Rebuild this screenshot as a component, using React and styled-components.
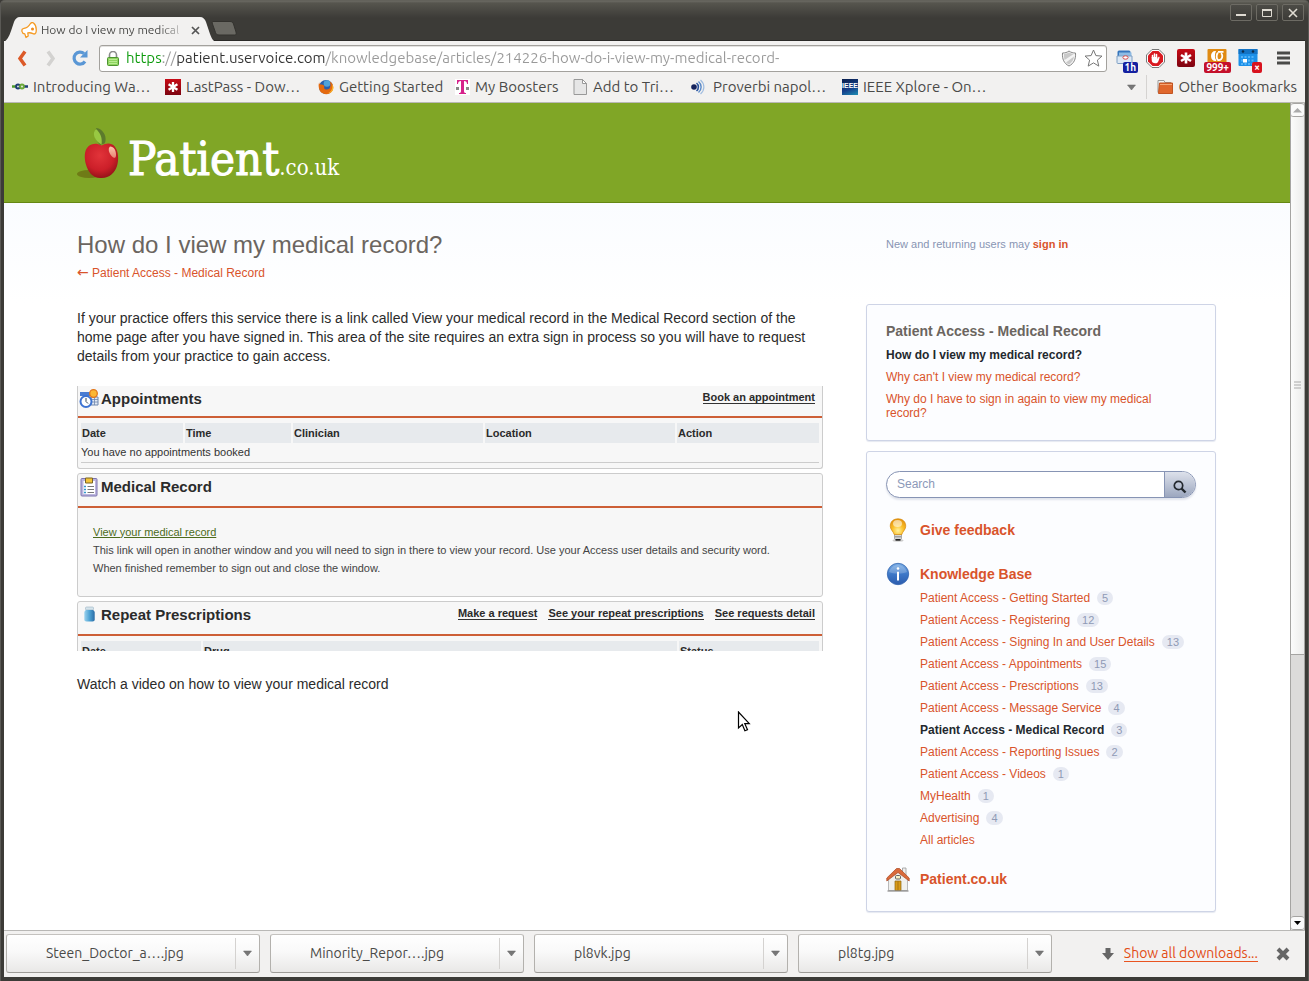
import React from "react";
import styled, { createGlobalStyle } from "styled-components";

const ui = `"Ubuntu", "Noto Sans", sans-serif`;
const body = `"Liberation Sans", Arial, sans-serif`;

const Global = createGlobalStyle`
  *, *::before, *::after { box-sizing: border-box; }
  html, body { margin: 0; padding: 0; }
  body { font-family: ${body}; color: #2b2b2b; background: #3c3b37; }
  button, input { font: inherit; color: inherit; margin: 0; }
  button { padding: 0; border: 0; background: none; cursor: default; }
  svg { display: block; flex: none; }
  h1, h2, h3, p, ul { margin: 0; padding: 0; }
  ul { list-style: none; }
`;

/* ---------- window frame ---------- */

const Window = styled.div`
  min-height: 100vh;
  display: flex;
  flex-direction: column;
  padding: 0 4px 4px;
  background: linear-gradient(#5b5a53 0, #6b6a63 1px, #56554e 3px, #3c3b37 18px);
  border-radius: 5px 5px 0 0;
  box-shadow: inset 1px 0 #5a5955, inset -1px 0 #5a5955;
`;

const TabStrip = styled.header`
  display: flex;
  height: 41px;
  justify-content: space-between;
  border-bottom: 1px solid #2b2a28;
`;

const TabGroup = styled.div`
  display: flex;
  align-items: flex-end;
  margin-bottom: -1px;
`;

const Tab = styled.div`
  position: relative;
  width: 212px;
  height: 25px;
  margin-bottom: -1px;
  display: flex;
  align-items: center;
  gap: 4px;
  padding: 1px 12px 0 17px;
  font: 12px/18px ${ui};
  color: #4a4a48;
`;

const TabShape = styled.svg`
  position: absolute;
  inset: 0;
  z-index: 0;
`;

const TabTitle = styled.span`
  position: relative;
  flex: 1;
  overflow: hidden;
  white-space: nowrap;
  mask-image: linear-gradient(90deg, #000 84%, transparent 104%);
`;

const OverTab = styled.span`
  position: relative;
  display: flex;
`;

const TabClose = styled.button`
  position: relative;
  display: grid;
  place-items: center;
  width: 18px;
  height: 18px;
`;

const NewTab = styled.button`
  margin: 0 0 5px -5px;
`;

const WindowButtons = styled.div`
  display: flex;
  gap: 4px;
  padding: 4px 1px 0 0;
`;

const WindowButton = styled.button`
  display: grid;
  place-items: center;
  width: 22px;
  height: 17px;
  border: 1px solid #6d6b64;
  border-radius: 2px;
  background: linear-gradient(#4c4b46, #3c3b37);
`;

/* ---------- toolbar ---------- */

const Toolbar = styled.nav`
  display: flex;
  align-items: center;
  height: 34px;
  padding: 0 14px 0 8px;
  background: #f2f1f0;
`;

const NavButton = styled.button`
  display: grid;
  place-items: center;
  width: 20px;
  height: 24px;
  margin-right: 9px;
`;

const UrlBox = styled.div`
  flex: 1;
  display: flex;
  align-items: center;
  gap: 7px;
  height: 27px;
  padding: 0 3px 0 7px;
  border: 1px solid #a3a19d;
  border-radius: 3px;
  background: #fff;
  box-shadow: inset 0 1px #e3e2e0;
`;

const UrlInput = styled.input`
  flex: 1;
  min-width: 0;
  padding: 0;
  border: 0;
  outline: 0;
  font: 15px/22px ${ui};
  background: linear-gradient(90deg, #0a9a0a 37px, #999 37px 51px, #333 51px 199px, #999 199px);
  background-clip: text;
  -webkit-text-fill-color: transparent;
`;

const Extensions = styled.div`
  display: flex;
  align-items: center;
  gap: 7px;
  margin: 0 16px 0 5px;
`;

const ExtButton = styled.button`
  position: relative;
  display: grid;
  place-items: center;
  width: 24px;
  height: 24px;
`;

const ExtBadge = styled.span`
  position: absolute;
  right: -2px;
  bottom: -3px;
  padding: 0 2px;
  border-radius: 2px;
  background: ${(p) => p.$color};
  color: #fff;
  font: bold 10px/11px ${ui};
`;

const BookmarkBar = styled.nav`
  display: flex;
  align-items: center;
  height: 28px;
  padding: 0 8px 3px;
  border-bottom: 1px solid #b9b8b6;
  background: #f2f1f0;
  font: 15px/20px ${ui};
`;

const Bookmark = styled.a`
  display: flex;
  align-items: center;
  gap: 5px;
  width: ${(p) => p.$width};
  flex: none;
  color: #4a4a48;
  white-space: nowrap;
  text-decoration: none;
`;

const More = styled.button`
  margin-left: auto;
  padding: 0 10px;
`;

const BarRule = styled.span`
  height: 24px;
  padding-left: 10px;
  border-left: 1px solid #d5d3d1;
`;

/* ---------- page ---------- */

const Viewport = styled.div`
  flex: 1;
  display: flex;
  background: #fff;
`;

const Page = styled.div`
  flex: 1;
  min-width: 0;
`;

const Banner = styled.div`
  display: flex;
  height: 100px;
  padding: 24px 73px 0;
  border-bottom: 1px solid #658712;
  background: #80a626;
`;

const Logo = styled.a`
  display: flex;
  gap: 8px;
  color: #fff;
  text-decoration: none;
  font-family: "DejaVu Serif Condensed", "DejaVu Serif", serif;
`;

const LogoText = styled.span`
  font-size: 47px;
  line-height: 64px;
  white-space: nowrap;
  -webkit-text-stroke: 1px #fff;
`;

const LogoSuffix = styled.span`
  font-size: 22px;
  -webkit-text-stroke: 0;
`;

const Columns = styled.div`
  display: grid;
  grid-template-columns: minmax(0, 1fr) 350px;
  gap: 43px;
  padding: 26px 74px 18px 73px;
  background: linear-gradient(#fafcff, #fff 100px);
`;

const Main = styled.main`
  position: relative;
`;

const Title = styled.h1`
  font-size: 24px;
  line-height: 32px;
  font-weight: normal;
  color: #6b6560;
`;

const Link = styled.a`
  color: #d9542b;
  text-decoration: none;
`;

const Arrow = styled.span`
  font-family: "DejaVu Sans", sans-serif;
  font-size: 14px;
  line-height: 1;
`;

const BackLine = styled.p`
  margin-top: 3px;
  font-size: 12px;
  line-height: 18px;
`;

const Paragraph = styled.p`
  margin-top: ${(p) => p.$top};
  font-size: 14px;
  line-height: 19px;
`;

const Shot = styled.section`
  height: 265px;
  margin-top: 20px;
  display: flex;
  flex-direction: column;
  gap: 4px;
  overflow: hidden;
  color: #444;
  font-size: 11px;
`;

const Card = styled.div`
  flex: none;
  border: 1px solid #ccc;
  border-top-width: ${(p) => (p.$cut ? 0 : "1px")};
  border-radius: ${(p) => (p.$cut ? "0 0 3px 3px" : "3px")};
  background: #f7f7f7;
`;

const CardHead = styled.div`
  display: flex;
  align-items: center;
  height: ${(p) => p.$height};
  padding: 0 7px 5px 1px;
  border-bottom: 2px solid #cd5f36;
  gap: 2px;
`;

const CardTitle = styled.h2`
  flex: 1;
  font-size: 15px;
  line-height: 20px;
  color: #2b2b2b;
`;

const CardLink = styled.a`
  margin: 0 0 3px 9px;
  border-bottom: 1px solid #333;
  color: #2b2b2b;
  font-weight: bold;
  font-size: 11px;
  line-height: 12px;
  text-decoration: none;
`;

const Table = styled.table`
  width: calc(100% - 6px);
  margin: 5px 3px;
  table-layout: fixed;
  border-collapse: collapse;
  text-align: left;

  th {
    height: 20px;
    padding: 0 1px;
    border-right: 2px solid #f7f7f7;
    background: #e7eaed;
    background-clip: padding-box;
    color: #2b2b2b;
  }
  th:last-child { border-right: 0; }
  td {
    height: 19px;
    padding: 0;
    border-bottom: 1px solid #ccc;
    color: #333;
  }
`;

const CardBody = styled.div`
  padding: 15px 15px 19px;
  line-height: 18px;
`;

const RecordLink = styled.a`
  color: #4c6b1c;
`;

const Cursor = styled.svg`
  position: absolute;
  left: 660px;
  top: 482px;
`;

/* ---------- sidebar ---------- */

const Side = styled.aside`
  display: flex;
  flex-direction: column;
  gap: 10px;
`;

const SignIn = styled.p`
  height: 65px;
  padding: 6px 20px 0;
  font-size: 11px;
  line-height: 18px;
  color: #8895b3;
`;

const Panel = styled.section`
  padding: 16px 19px 20px;
  border: 1px solid #ced4e6;
  border-radius: 3px;
  background: #fcfdff;
  box-shadow: 0 1px 1px #e6e9f1;
  font-size: 12px;
`;

const PanelTitle = styled.h3`
  margin-bottom: 7px;
  font-size: 14px;
  line-height: 20px;
  color: #6b6560;
`;

const Related = styled.ul`
  display: flex;
  flex-direction: column;
  gap: 8px;
  padding-right: 20px;
  line-height: 14px;
`;

const Search = styled.form`
  display: flex;
  height: 27px;
  margin: 3px 0 20px;
  overflow: hidden;
  border: 1px solid #8794b4;
  border-radius: 14px;
  background: #fff;
  box-shadow: 0 2px 2px #e1e4ec;
`;

const SearchInput = styled.input`
  flex: 1;
  min-width: 0;
  padding: 0 10px 2px;
  border: 0;
  outline: 0;
  background: none;
  &::placeholder { color: #8c99b8; opacity: 1; }
`;

const SearchButton = styled.button`
  display: grid;
  place-items: center;
  width: 31px;
  padding-top: 4px;
  border-left: 1px solid #8794b4;
  background: linear-gradient(#dde1eb, #9ca7bf);
`;

const Section = styled.div`
  display: flex;
  align-items: center;
  gap: 10px;
  height: 24px;
  margin-top: ${(p) => p.$top || 0};
  font-size: 14px;
  font-weight: bold;
`;

const Topics = styled.ul`
  margin-left: 34px;
  padding-top: 1px;
`;

const Topic = styled.li`
  display: flex;
  align-items: center;
  gap: 7px;
  height: 22px;
`;

const Current = styled.strong`
  color: #23282e;
`;

const Count = styled.span`
  padding: 0 5px;
  border-radius: 7px;
  background: #e6e9f2;
  color: #8f9ab5;
  font-size: 11px;
  line-height: 14px;
`;

/* ---------- scroll bar ---------- */

const ScrollTrack = styled.div`
  width: 15px;
  display: flex;
  flex-direction: column;
  border: solid #a5a4a2;
  border-width: 0 1px;
  background: #dcdbda;
`;

const ScrollButton = styled.button`
  display: grid;
  place-items: center;
  height: 14px;
  border: solid #a5a4a2;
  border-width: 1px 0;
  border-radius: 3px;
  background: #fafafa;
`;

const Thumb = styled.div`
  flex: 0 0 65%;
  display: grid;
  place-items: center;
  border-bottom: 1px solid #a5a4a2;
  background: linear-gradient(90deg, #fbfbfb, #ececeb);
`;

/* ---------- downloads ---------- */

const Downloads = styled.footer`
  display: flex;
  align-items: center;
  gap: 10px;
  height: 47px;
  padding: 0 15px 1px 2px;
  border-top: 1px solid #b9b8b6;
  background: #f2f1f0;
  font: 14px/18px ${ui};
  color: #4a4a48;
`;

const Download = styled.div`
  display: flex;
  flex: 0 1 254px;
  height: 39px;
  border: 1px solid #b3b1ad;
  border-color: #c4c2bf #b3b1ad #9d9b97;
  border-radius: 3px;
  background: linear-gradient(#fff, #f9f9f9 45%, #e9e8e7);
`;

const FileButton = styled.button`
  flex: 1;
  padding: 0 0 1px 39px;
  text-align: left;
`;

const FileMenu = styled.button`
  display: grid;
  place-items: center;
  width: 24px;
  margin: 3px 0;
  border-left: 1px solid #d4d2d0;
`;

const ShowAll = styled.a`
  margin-right: 8px;
  border-bottom: 1px solid #e95420;
  color: #e24c14;
  line-height: 16px;
  text-decoration: none;
`;

const Spacer = styled.span`
  flex: 1;
`;

/* ---------- drawings ---------- */

const Down = () => (
  <svg width="9" height="7" viewBox="0 0 9 7"><path d="M.5 1h8L4.500 6z" fill="#777" stroke="#666" strokeWidth=".5" /></svg>
);

const Asterisk = ({ size = 16, r = 0 }) => (
  <svg width={size} height={size} viewBox="0 0 18 18">
    <defs><linearGradient id="lp" x2="0" y2="1"><stop stopColor="#c80b16" /><stop offset="1" stopColor="#7c0410" /></linearGradient></defs>
    <rect width="18" height="18" rx={r} fill="url(#lp)" />
    <path d="M9 3.500v11M4 6l10 6M14 6L4 12" stroke="#fff" strokeWidth="2.600" />
  </svg>
);

const Megaphone = () => (
  <svg width="16" height="17" viewBox="0 0 16 17" fill="#fff" stroke="#f59a23" strokeWidth="1.300" strokeLinejoin="round">
    <path d="M1 9.500c-.4-2 .6-3 2-3.200C6 6 8 4 9.500 1.500c.8-1 2-1.200 3-.4 2 1.600 3 5 2.700 8.200-.2 2.200-1.600 3.200-3.200 2.400-2-1-3.500-1.200-5.200-.8l.4 3.100-2.200 1.500-1.200-3.600C2.400 11.700 1.200 11 1 9.500z" />
    <circle cx="11.500" cy="7" r="1.500" fill="#f08a1a" stroke="none" />
  </svg>
);

const Apple = () => (
  <svg width="43" height="54" viewBox="0 0 43 54">
    <defs>
      <radialGradient id="ap" cx=".45" cy=".35" r=".7"><stop stopColor="#e2343a" /><stop offset=".6" stopColor="#cc1f29" /><stop offset="1" stopColor="#8c1116" /></radialGradient>
      <linearGradient id="sheen" x2="0" y2="1"><stop stopColor="#fbc7ac" /><stop offset="1" stopColor="#e98273" /></linearGradient>
    </defs>
    <ellipse cx="12" cy="47" rx="12" ry="4" fill="#6f7b16" />
    <path d="M24.500 18.500c-4-2.300-9.500-2.500-13.300 1C7 23.500 7.300 31 8.800 37c2.200 8 7.200 14.500 15.200 14 8 .5 13.700-5 16-12 2-6 1.500-15-2.300-19.500-3.400-4-8.700-3.500-13.200-1z" fill="url(#ap)" />
    <path d="M23 18C18 13 15.500 5 19.500 1c6 1 10 7 9 13-.3 2-1 3-2.500 3z" fill="#5c7a2c" />
    <path d="M24.500 17.500C17.500 14 14.500 6 19 2c4.500 4 6.500 9 5.500 15.500z" fill="#98c842" />
    <path d="M33 19.500c4 0 6 4 6 8.500-.1 3.500-2 3.500-4 1.500-3-3-4.500-8-2-10z" fill="url(#sheen)" />
  </svg>
);

const Shield = () => (
  <svg width="16" height="17" viewBox="0 0 16 17"><path d="M8 1c2 1.500 4 2 6.500 2 .5 6-1.500 10.500-6.500 13C3 13.500 1 9 1.500 3 4 3 6 2.500 8 1z" fill="#f4f4f4" stroke="#888" /><path d="M3 4c2 0 3.500-.5 5-1.400 1.500.9 3 1.400 4.700 1.400L3.500 10C3 8 2.900 6 3 4zM5 12.500l8-6c-.3 3-2 6-5 8-1.200-.6-2.200-1.200-3-2z" fill="#c9c9c9" /></svg>
);

const Star = () => (
  <svg width="19" height="18" viewBox="0 0 19 18"><path d="M9.500 1l2.400 5.600 6.100.5-4.600 4 1.400 6-5.300-3.200-5.300 3.200 1.400-6-4.600-4 6.100-.5z" fill="#fff" stroke="#777" strokeLinejoin="round" /></svg>
);

const CheckMail = () => (
  <svg width="17" height="16" viewBox="0 0 17 16"><rect x="1.500" y=".5" width="13" height="9" rx="1.500" fill="#3676bd" /><rect x="3" y="2.500" width="12.500" height="3.500" fill="#8dbbe4" /><path d="M1 6h15v6.500c0 .6-.4 1-1 1H2c-.6 0-1-.4-1-1z" fill="#dde8f4" stroke="#7f9fc4" /><ellipse cx="9.500" cy="7.500" rx="2.600" ry="1.700" fill="#fff" stroke="#d44a4a" /></svg>
);

const StopHand = () => (
  <svg width="19" height="19" viewBox="0 0 19 19"><path d="M6 .5h7L18.500 6v7L13 18.500H6L.5 13V6z" fill="#fff" stroke="#777" /><path d="M6.500 2h6L17 6.500v6L12.500 17h-6L2 12.500v-6z" fill="#d91920" /><path d="M6.500 9V6.500M8.500 9V5M10.500 9V5.500" stroke="#fff" strokeWidth="1.500" strokeLinecap="round" /><path d="M5.700 8h5.600v2l1-1.800c.5-.8 1.500-.4 1.300.5l-1 3c-.5 1.600-1.600 2.600-3.300 2.600-2.200 0-3.600-1.200-3.600-3.300z" fill="#fff" /></svg>
);

const GoldStats = () => (
  <svg width="20" height="18" viewBox="0 0 20 18">
    <rect width="19" height="16" x=".5" rx="1" fill="#e08a12" />
    <path d="M9 2C6 1.600 4 3.800 4 7s2 5 4.500 5c.8 0 1-.4.600-1C7.500 9 7.500 5 9 2z" fill="#fff" />
    <path d="M11 3.800c-1.800 1.500-1.800 5.800 0 7.200 2.800.4 4.300-1.500 4.300-4 0-1.300-.5-2.200-1.300-2.800" fill="none" stroke="#fff" strokeWidth="1.800" />
    <path d="M11 2.900h5.500" stroke="#fff" strokeWidth="1.800" />
  </svg>
);

const CalendarBlue = () => (
  <svg width="20" height="18" viewBox="0 0 20 18"><rect width="19" height="17" x=".5" rx="1" fill="#1c90e8" /><rect x=".5" width="19" height="5" fill="#1473c4" /><circle cx="5" cy="2.500" r="1.300" fill="#0c2c4c" /><circle cx="15" cy="2.500" r="1.300" fill="#0c2c4c" /><path d="M3 8h14M3 11.500h14M3 15h14" stroke="#52b2f7" strokeWidth="2" strokeDasharray="2 1.500" /><rect x="5" y="10" width="4" height="3.500" fill="#fff" /></svg>
);

const Knot = () => (
  <svg width="16" height="16" viewBox="0 0 16 16" fill="none"><path d="M0 7.500h4" stroke="#4c9a2c" strokeWidth="2.500" /><path d="M12 7.500h4" stroke="#1f3e74" strokeWidth="2.500" /><circle cx="6" cy="7.500" r="1.900" stroke="#1f3e74" strokeWidth="2" /><circle cx="10" cy="7.500" r="1.900" stroke="#6ba83a" strokeWidth="2" /></svg>
);

const Firefox = () => (
  <svg width="16" height="16" viewBox="0 0 16 16"><circle cx="8" cy="8" r="7" fill="#2a5fae" /><circle cx="9" cy="4.500" r="3.300" fill="#4fa3dc" /><path d="M1.200 3C1 5 2 5.500 3.500 5.500 6 6 7 7 6 8.500 6 10.500 9 11.500 11.500 9.500c1.200-2 1.300-4 .3-7C15 4 16 8 14.500 11.500 12.500 16 5 16.500 2 12 .3 9 .3 6 1.200 3z" fill="#e4690e" /><path d="M14 5.500c1 4-1 8-5 9 4-.2 6.300-2.500 6.500-6 0-1-.7-2.300-1.500-3z" fill="#fcb42a" /></svg>
);

const TMobile = () => (
  <svg width="15" height="16" viewBox="0 0 15 16"><rect width="15" height="16" fill="#fff" /><path d="M2 1h11v4h-1c0-2-1-3-3-3v10c0 1.500.5 2 2 2v1H4v-1c1.500 0 2-.5 2-2V2C4 2 3 3 3 5H2z" fill="#d6228b" /><path d="M1 8h3v3H1zM11 8h3v3h-3z" fill="#888" /></svg>
);

const PageIcon = () => (
  <svg width="15" height="16" viewBox="0 0 15 16"><path d="M1 .5h8.500l4 4v11H1z" fill="#e6e6e6" stroke="#999" /><path d="M9.500.5v4h4z" fill="#fff" stroke="#999" /></svg>
);

const Sound = () => (
  <svg width="18" height="16" viewBox="0 0 18 16" fill="none"><circle cx="4" cy="8" r="2.800" fill="#14225c" /><path d="M6.500 4c2.500 2 2.500 6 0 8" stroke="#27509c" strokeWidth="1.600" /><path d="M8.500 2.500c3.500 3 3.500 8 0 11" stroke="#5b8ac8" strokeWidth="1.400" /><path d="M10.500 1c4.500 4 4.500 10 0 14" stroke="#9fbce0" strokeWidth="1.200" /></svg>
);

const Badge = styled.span`
  width: 16px;
  height: 16px;
  flex: none;
  background: linear-gradient(160deg, #081d4b, #16418c 60%, #1e90b4);
  color: #fff;
  font: bold 7px/14px ${body};
  text-align: center;
`;

const Folder = () => (
  <svg width="16" height="16" viewBox="0 0 16 16"><path d="M1 13.500V1.500h6l1 2h6" fill="#f4f4f4" stroke="#999" /><path d="M2.500 4h13v10.500h-14z" fill="#e0672c" stroke="#c25422" /><path d="M3 5.500h12" stroke="#f5a675" /></svg>
);

const Bulb = () => (
  <svg width="24" height="24" viewBox="0 0 24 24">
    <defs><radialGradient id="bu" cx=".5" cy=".75" r=".8"><stop stopColor="#fff3a0" /><stop offset=".45" stopColor="#fbc02a" /><stop offset="1" stopColor="#e08a08" /></radialGradient></defs>
    <ellipse cx="12" cy="22.500" rx="5.500" ry="1.200" fill="#ccc" />
    <path d="M8.500 16h7v4.500l-1.500 2h-4l-1.500-2z" fill="#d7d7d7" stroke="#8a8a8a" strokeWidth=".7" />
    <path d="M9 18.800h6" stroke="#777" strokeWidth=".8" /><path d="M9.500 21.800h5" stroke="#222" strokeWidth="1.600" />
    <path d="M12 .8c5 0 8 3.400 7.700 7.600-.2 3.600-3 4.800-3.900 8.100H8.200C7.300 13.200 4.500 12 4.300 8.400 4 4.200 7 .8 12 .8z" fill="url(#bu)" stroke="#d58a0c" strokeWidth=".7" />
    <ellipse cx="11.500" cy="5.500" rx="4.500" ry="3.500" fill="#fff" opacity=".55" />
  </svg>
);

const Info = () => (
  <svg width="24" height="24" viewBox="0 0 24 24">
    <defs><linearGradient id="inf" x2="0" y2="1"><stop stopColor="#7cafe6" /><stop offset=".5" stopColor="#3d78c8" /><stop offset="1" stopColor="#2c5cae" /></linearGradient></defs>
    <circle cx="12" cy="12" r="10.700" fill="url(#inf)" stroke="#3466b0" strokeWidth=".8" />
    <path d="M3 10a9.300 9.300 0 0118 0c-5 2-13 2-18 0z" fill="#fff" opacity=".2" />
    <path d="M12 9.800V18.500" stroke="#fff" strokeWidth="2" /><circle cx="12" cy="6.500" r="1.300" fill="#fff" />
  </svg>
);

const House = () => (
  <svg width="24" height="25" viewBox="0 0 24 25">
    <path d="M16.500 1h3.500v8h-3.500z" fill="#eee" stroke="#999" strokeWidth=".8" />
    <path d="M2.500 11.500L12 3l9.500 8.500v12h-19z" fill="#f0f0ee" stroke="#aaa" strokeWidth=".8" />
    <path d="M.8 11L10.500 1.500h3L23.200 11v3L12 5.500.8 14z" fill="#d96a3b" stroke="#a94520" strokeWidth=".7" />
    <rect x="9.500" y="8.500" width="5" height="3.500" rx="1" fill="#f8efc4" stroke="#555" strokeWidth=".9" />
    <path d="M9 14h6v9.500H9z" fill="#d89a18" stroke="#8e6510" strokeWidth=".7" />
    <path d="M12 14v9.500" stroke="#a87510" /><path d="M1.500 24h21" stroke="#8b8b8b" strokeWidth="1.200" />
  </svg>
);

const Clock = () => (
  <svg width="20" height="20" viewBox="0 0 20 20"><rect x="1" y="3" width="17" height="4" fill="#4a7cd2" /><path d="M12 8h7v8h-7z" fill="#e2e9f4" stroke="#6e86ad" /><path d="M12 10.500h7M12 13h7M15.500 8v8" stroke="#6e86ad" strokeWidth=".8" /><circle cx="7" cy="12.500" r="5.500" fill="#fff" stroke="#3d73d2" strokeWidth="2" /><path d="M7 9v3.500l2 2" fill="none" stroke="#345" /><circle cx="14.500" cy="4.500" r="3.800" fill="#fbb734" stroke="#e2761a" strokeWidth="1.300" /></svg>
);

const Clipboard = () => (
  <svg width="20" height="20" viewBox="0 0 20 20"><rect x="2" y="1.500" width="16" height="17.500" rx="1" fill="#bcb6de" stroke="#7d74b0" /><rect x="4.500" y="4" width="11.500" height="13" fill="#fff" /><path d="M6.500 1h7v5h-7z" fill="#f3c43a" stroke="#796424" /><path d="M8.500 9.500H15M8.500 12.500H15M8.500 15.500H15" stroke="#777" /><path d="M5 9.500h2M5 12.500h2M5 15.500h2" stroke="#3399cc" strokeWidth="1.500" /></svg>
);

const Bottle = () => (
  <svg width="20" height="20" viewBox="0 0 20 20"><defs><linearGradient id="bo"><stop stopColor="#9cd3ee" /><stop offset=".5" stopColor="#4ea3d4" /><stop offset="1" stopColor="#2a6ca6" /></linearGradient></defs><rect x="6.500" y="2" width="8" height="3" rx="1" fill="#d5e4ec" stroke="#9ab4c4" strokeWidth=".6" /><path d="M7 5h7c1.200.6 1.700 1.600 1.700 2.800v6.500c0 1.500-.8 2.200-2.200 2.200h-6c-1.500 0-2.200-.7-2.200-2.200V7.800C5.300 6.600 5.800 5.600 7 5z" fill="url(#bo)" /></svg>
);

const bookmarks = [
  ["Introducing Wa…", <Knot />, "153px"],
  ["LastPass - Dow…", <Asterisk />, "153px"],
  ["Getting Started", <Firefox />, "137px"],
  ["My Boosters", <TMobile />, "118px"],
  ["Add to Tri…", <PageIcon />, "117px"],
  ["Proverbi napol…", <Sound />, "152px"],
  ["IEEE Xplore - On…", <Badge>IEEE</Badge>, "145px"],
];

const topics = [
  ["Patient Access - Getting Started", 5],
  ["Patient Access - Registering", 12],
  ["Patient Access - Signing In and User Details", 13],
  ["Patient Access - Appointments", 15],
  ["Patient Access - Prescriptions", 13],
  ["Patient Access - Message Service", 4],
  ["Patient Access - Medical Record", 3],
  ["Patient Access - Reporting Issues", 2],
  ["Patient Access - Videos", 1],
  ["MyHealth", 1],
  ["Advertising", 4],
  ["All articles"],
];

const files = ["Steen_Doctor_a….jpg", "Minority_Repor….jpg", "pl8vk.jpg", "pl8tg.jpg"];

export default function App() {
  return (
    <Window>
      <Global />
      <TabStrip>
        <TabGroup>
          <Tab>
            <TabShape width="212" height="25" viewBox="0 0 212 25">
              <path d="M0 25C3 23 5 20 7 14L10 5C11 2 13 0 16 0H196C199 0 201 2 202 5L206 17C208 22 209 24 212 25z" fill="#f2f1f0" />
            </TabShape>
            <OverTab><Megaphone /></OverTab>
            <TabTitle>How do I view my medical</TabTitle>
            <TabClose aria-label="Close tab">
              <svg width="9" height="9" viewBox="0 0 9 9"><path d="M1 1l7 7M8 1L1 8" stroke="#555" strokeWidth="1.700" /></svg>
            </TabClose>
          </Tab>
          <NewTab aria-label="New tab">
            <svg width="26" height="15" viewBox="0 0 26 15"><path d="M2 .5h17c2 0 3 1 3.500 2.500L25 11c.5 2 0 3-1.500 3H8c-2 0-3-1-3.500-2.500L1.500 3C1 1.500 1 .5 2 .5z" fill="#6a6963" stroke="#33322e" /></svg>
          </NewTab>
        </TabGroup>
        <WindowButtons>
          <WindowButton aria-label="Minimise"><svg width="12" height="10"><path d="M1 7h10" stroke="#dfdbd2" strokeWidth="2" /></svg></WindowButton>
          <WindowButton aria-label="Maximise"><svg width="12" height="10"><path d="M1.500 2h9v6.500h-9z" fill="none" stroke="#dfdbd2" /><path d="M1 2h10" stroke="#dfdbd2" strokeWidth="2" /></svg></WindowButton>
          <WindowButton aria-label="Close"><svg width="10" height="10"><path d="M1 1l8 8M9 1L1 9" stroke="#dfdbd2" strokeWidth="1.600" /></svg></WindowButton>
        </WindowButtons>
      </TabStrip>

      <Toolbar>
        <NavButton aria-label="Back"><svg width="12" height="17" viewBox="0 0 12 17"><path d="M9 1.500L4 8.500L9 15.500" fill="none" stroke="#dc5a28" strokeWidth="3.500" /></svg></NavButton>
        <NavButton aria-label="Forward"><svg width="12" height="17" viewBox="0 0 12 17"><path d="M3 1.500l5 7L3 15.500" fill="none" stroke="#d3d2d0" strokeWidth="3.500" /></svg></NavButton>
        <NavButton aria-label="Reload"><svg width="18" height="18" viewBox="0 0 18 18"><path d="M14 12.500A6 6 0 1113 4.500" fill="none" stroke="#5a97d5" strokeWidth="3.200" /><path d="M16.500 1v7.500H9z" fill="#5a97d5" /></svg></NavButton>
        <UrlBox>
          <svg width="12" height="15" viewBox="0 0 12 15"><path d="M2.500 7V4a3.500 3.500 0 017 0v3" fill="none" stroke="#8b8b8b" strokeWidth="1.600" /><rect x=".5" y="6.500" width="11" height="8" rx="1" fill="#8fd460" stroke="#4d9430" /><path d="M2 8.500h8M2 10.500h8M2 12.500h8" stroke="#b9ec92" /></svg>
          <UrlInput aria-label="Address" defaultValue="https://patient.uservoice.com/knowledgebase/articles/214226-how-do-i-view-my-medical-record-" />
          <Shield />
          <Star />
        </UrlBox>
        <Extensions>
          <ExtButton aria-label="Mail checker"><CheckMail /><ExtBadge $color="#1420a0">1h</ExtBadge></ExtButton>
          <ExtButton aria-label="Ad blocker"><StopHand /></ExtButton>
          <ExtButton aria-label="LastPass"><Asterisk size={18} r={2} /></ExtButton>
          <ExtButton aria-label="Statistics"><GoldStats /><ExtBadge $color="#c4102a">999+</ExtBadge></ExtButton>
          <ExtButton aria-label="Calendar"><CalendarBlue /><ExtBadge $color="#d8121e">×</ExtBadge></ExtButton>
        </Extensions>
        <button aria-label="Menu"><svg width="15" height="14"><path d="M1 2h13M1 7h13M1 12h13" stroke="#4a4a48" strokeWidth="3" /></svg></button>
      </Toolbar>

      <BookmarkBar>
        {bookmarks.map(([name, icon, width]) => (
          <Bookmark key={name} href="#" $width={width}>{icon}{name}</Bookmark>
        ))}
        <More aria-label="More bookmarks"><Down /></More>
        <BarRule />
        <Bookmark href="#"><Folder />Other Bookmarks</Bookmark>
      </BookmarkBar>

      <Viewport>
        <Page>
          <Banner>
            <Logo href="#"><Apple /><LogoText>Patient<LogoSuffix>.co.uk</LogoSuffix></LogoText></Logo>
          </Banner>
          <Columns>
            <Main>
              <Title>How do I view my medical record?</Title>
              <BackLine><Link href="#"><Arrow>←</Arrow> Patient Access - Medical Record</Link></BackLine>
              <Paragraph $top="27px">
                If your practice offers this service there is a link called View your medical record in the Medical Record section of the home page after you have signed in. This area of the site requires an extra sign in process so you will have to request details from your practice to gain access.
              </Paragraph>
              <Shot>
                <Card $cut>
                  <CardHead $height="32px">
                    <Clock /><CardTitle>Appointments</CardTitle>
                    <CardLink href="#">Book an appointment</CardLink>
                  </CardHead>
                  <Table>
                    <colgroup><col width="103" /><col width="108" /><col width="192" /><col width="192" /><col /></colgroup>
                    <thead><tr><th>Date</th><th>Time</th><th>Clinician</th><th>Location</th><th>Action</th></tr></thead>
                    <tbody><tr><td colSpan="5">You have no appointments booked</td></tr></tbody>
                  </Table>
                </Card>
                <Card>
                  <CardHead $height="34px"><Clipboard /><CardTitle>Medical Record</CardTitle></CardHead>
                  <CardBody>
                    <RecordLink href="#">View your medical record</RecordLink>
                    <p>This link will open in another window and you will need to sign in there to view your record. Use your Access user details and security word.</p>
                    <p>When finished remember to sign out and close the window.</p>
                  </CardBody>
                </Card>
                <Card>
                  <CardHead $height="34px">
                    <Bottle /><CardTitle>Repeat Prescriptions</CardTitle>
                    <CardLink href="#">Make a request</CardLink>
                    <CardLink href="#">See your repeat prescriptions</CardLink>
                    <CardLink href="#">See requests detail</CardLink>
                  </CardHead>
                  <Table>
                    <colgroup><col width="121" /><col width="476" /><col /></colgroup>
                    <thead><tr><th>Date</th><th>Drug</th><th>Status</th></tr></thead>
                  </Table>
                </Card>
              </Shot>
              <Paragraph $top="24px">Watch a video on how to view your medical record</Paragraph>
              <Cursor width="14" height="22" viewBox="0 0 14 22">
                <path d="M1.500 1v16l3.800-3.500 2.600 6.300 2.600-1.100-2.700-6h4.500z" fill="#fff" stroke="#000" strokeWidth="1.200" />
              </Cursor>
            </Main>

            <Side>
              <SignIn>New and returning users may <Link href="#"><b>sign in</b></Link></SignIn>
              <Panel>
                <PanelTitle>Patient Access - Medical Record</PanelTitle>
                <Related>
                  <li><Current>How do I view my medical record?</Current></li>
                  <li><Link href="#">Why can't I view my medical record?</Link></li>
                  <li><Link href="#">Why do I have to sign in again to view my medical record?</Link></li>
                </Related>
              </Panel>
              <Panel>
                <Search onSubmit={(e) => e.preventDefault()}>
                  <SearchInput aria-label="Search" placeholder="Search" />
                  <SearchButton aria-label="Go"><svg width="14" height="14" viewBox="0 0 14 14"><circle cx="5.500" cy="5.500" r="4.200" fill="none" stroke="#23282e" strokeWidth="1.700" /><path d="M8.500 8.500l4 4" stroke="#23282e" strokeWidth="2.400" /></svg></SearchButton>
                </Search>
                <Section><Bulb /><Link href="#">Give feedback</Link></Section>
                <Section $top="20px"><Info /><Link href="#">Knowledge Base</Link></Section>
                <Topics>
                  {topics.map(([name, n]) => (
                    <Topic key={name}>
                      {n === 3 ? <Current>{name}</Current> : <Link href="#">{name}</Link>}
                      {n && <Count>{n}</Count>}
                    </Topic>
                  ))}
                </Topics>
                <Section $top="16px"><House /><Link href="#">Patient.co.uk</Link></Section>
              </Panel>
            </Side>
          </Columns>
        </Page>
        <ScrollTrack>
          <ScrollButton aria-label="Scroll up"><svg width="9" height="6"><path d="M0 5.500h9L4.500 1z" fill="#aaa" /></svg></ScrollButton>
          <Thumb><svg width="7" height="8"><path d="M0 1h7M0 4h7M0 7h7" stroke="#aaa" /></svg></Thumb>
          <Spacer />
          <ScrollButton aria-label="Scroll down"><svg width="9" height="6"><path d="M1 1h7L4.500 5z" fill="#000" /></svg></ScrollButton>
        </ScrollTrack>
      </Viewport>

      <Downloads>
        {files.map((f) => (
          <Download key={f}>
            <FileButton>{f}</FileButton>
            <FileMenu aria-label={`Options for ${f}`}><Down /></FileMenu>
          </Download>
        ))}
        <Spacer />
        <svg width="12" height="12" viewBox="0 0 12 12"><path d="M3.500 0h5v5H12l-6 7-6-7h3.500z" fill="#666" /></svg>
        <ShowAll href="#">Show all downloads...</ShowAll>
        <button aria-label="Close downloads"><svg width="14" height="14" viewBox="0 0 14 14"><path d="M2 2l10 10M12 2L2 12" stroke="#666" strokeWidth="4" /></svg></button>
      </Downloads>
    </Window>
  );
}
